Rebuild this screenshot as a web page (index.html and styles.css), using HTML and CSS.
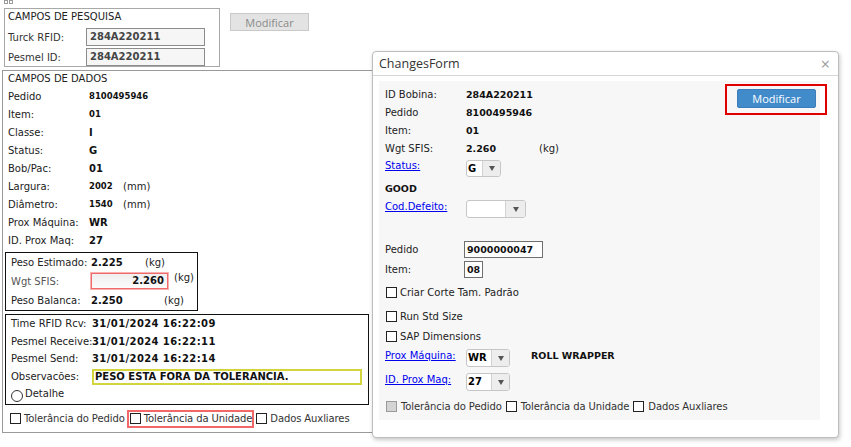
FILE: index.html
```html
<!DOCTYPE html>
<html>
<head>
<meta charset="utf-8">
<link rel="stylesheet" href="styles.css">
</head>
<body>
<div class="grips"><i></i><i></i></div>
<div class="top">
  <div class="search">
    <div class="ttl">CAMPOS DE PESQUISA</div>
    <div class="srow"><span class="slab">Turck RFID:</span><span class="sinp">284A220211</span></div>
    <div class="srow s2"><span class="slab">Pesmel ID:</span><span class="sinp">284A220211</span></div>
  </div>
  <button class="btn-dis">Modificar</button>
</div>
<div class="data">
  <div class="dttl">CAMPOS DE DADOS</div>
  <div class="drow"><span class="dlab">Pedido</span><b class="v8">8100495946</b></div>
  <div class="drow"><span class="dlab">Item:</span><b class="v8">01</b></div>
  <div class="drow"><span class="dlab">Classe:</span><b class="v10">I</b></div>
  <div class="drow"><span class="dlab">Status:</span><b class="v10">G</b></div>
  <div class="drow"><span class="dlab">Bob/Pac:</span><b class="v10">01</b></div>
  <div class="drow"><span class="dlab">Largura:</span><b class="v8 w34">2002</b><span>(mm)</span></div>
  <div class="drow"><span class="dlab">Diâmetro:</span><b class="v8 w34">1540</b><span>(mm)</span></div>
  <div class="drow"><span class="dlab">Prox Máquina:</span><b class="v10">WR</b></div>
  <div class="drow"><span class="dlab">ID. Prox Maq:</span><b class="v10">27</b></div>
  <div class="wbox">
    <div class="wrow r1"><span class="wlab">Peso Estimado:</span><b class="v10 w54">2.225</b><span>(kg)</span></div>
    <div class="wrow r2"><span class="wlab grey">Wgt SFIS:</span><span class="winp">2.260</span><span class="kgup">(kg)</span></div>
    <div class="wrow r3"><span class="wlab">Peso Balanca:</span><b class="v10 w73">2.250</b><span>(kg)</span></div>
  </div>
  <div class="tbox">
    <div class="trow h17"><span class="tlab">Time RFID Rcv:</span><b class="v10 date">31/01/2024 16:22:09</b></div>
    <div class="trow h18"><span class="tlab">Pesmel Receive:</span><b class="v10 date">31/01/2024 16:22:11</b></div>
    <div class="trow h17"><span class="tlab">Pesmel Send:</span><b class="v10 date">31/01/2024 16:22:14</b></div>
    <div class="trow h19"><span class="tlab">Observacões:</span><span class="obs">PESO ESTA FORA DA TOLERANCIA.</span></div>
    <div class="trow h17"><span class="radio"></span><span class="rlab">Detalhe</span></div>
  </div>
  <div class="chks">
    <span class="cb"></span><span class="ct">Tolerância do Pedido</span>
    <span class="red"><span class="cb"></span><span class="ct">Tolerância da Unidade</span></span>
    <span class="cb"></span><span class="ct">Dados Auxliares</span>
  </div>
</div>

<div class="dialog">
  <div class="dhead"><span>ChangesForm</span><span class="close">×</span></div>
  <div class="dbody">
    <div class="panel">
      <div class="pleft">
        <div class="prow"><span class="plab">ID Bobina:</span><b class="pv">284A220211</b></div>
        <div class="prow"><span class="plab">Pedido</span><b class="pv">8100495946</b></div>
        <div class="prow"><span class="plab">Item:</span><b class="pv">01</b></div>
        <div class="prow"><span class="plab">Wgt SFIS:</span><b class="pv w73">2.260</b><span>(kg)</span></div>
        <div class="prow status"><a class="plab lnk">Status:</a><span class="sel w35 h17"><span class="sv">G</span><span class="sa"></span></span></div>
        <div class="prow"><b class="pv">GOOD</b></div>
        <div class="prow cod"><a class="plab lnk">Cod.Defeito:</a><span class="sel w60"><span class="sv"></span><span class="sa wa20"></span></span></div>
        <div class="prow ped"><span class="plab pl79">Pedido</span><span class="tin w79">9000000047</span></div>
        <div class="prow itm"><span class="plab pl79">Item:</span><span class="tin w19">08</span></div>
        <div class="prow m5"><span class="cb ml1"></span><span>Criar Corte Tam. Padrão</span></div>
        <div class="prow m6"><span class="cb ml1"></span><span>Run Std Size</span></div>
        <div class="prow m2"><span class="cb ml1"></span><span>SAP Dimensions</span></div>
        <div class="prow prox"><a class="plab lnk">Prox Máquina:</a><span class="sel w44"><span class="sv">WR</span><span class="sa"></span></span><b class="roll">ROLL WRAPPER</b></div>
        <div class="prow idp"><a class="plab lnk">ID. Prox Maq:</a><span class="sel w44"><span class="sv">27</span><span class="sa"></span></span></div>
        <div class="prow m6 dchk"><span class="cb ml1 dis"></span><span class="ct">Tolerância do Pedido</span><span class="cb"></span><span class="ct">Tolerância da Unidade</span><span class="cb"></span><span class="ct">Dados Auxliares</span></div>
      </div>
      <button class="pbtn">Modificar</button>
    </div>
  </div>
  <div class="hilite"></div>
</div>
</body>
</html>
```
FILE: styles.css
```css
* { box-sizing: border-box; }
body {
  margin: 0;
  width: 851px;
  height: 447px;
  overflow: hidden;
  position: relative;
  background: #fff;
  font-family: "DejaVu Sans", Verdana, sans-serif;
  font-size: 10px;
  color: #222;
  white-space: nowrap;
}
b { font-weight: bold; color: #111; }

.grips { display: flex; gap: 1px; padding-left: 4px; height: 8px; }
.grips i { width: 4px; height: 4px; border: 1px solid #9a9a9a; }

.top { display: flex; align-items: flex-start; margin-left: 4px; }
.search {
  width: 216px;
  height: 59px;
  border: 1px solid #a8a8a8;
  padding-left: 3px;
}
.ttl { line-height: 15px; height: 14px; color: #222; }
.srow { display: flex; align-items: center; margin-top: 5px; }
.srow.s2 { margin-top: 2px; }
.slab { width: 78px; color: #333; }
.sinp {
  width: 119px;
  height: 18px;
  border: 1px solid #8c8c8c;
  background: #f6f6f6;
  font-weight: bold;
  color: #444;
  padding-left: 3px;
  line-height: 16px;
}
.btn-dis {
  margin: 5px 0 0 10px;
  width: 79px;
  height: 18px;
  padding: 0;
  background: #e3e3e3;
  border: 1px solid #c9c9c9;
  color: #8a8a8a;
  font-family: "Open Sans", sans-serif;
  font-size: 11px;
  line-height: 15px;
}

.data {
  margin: 3px 0 0 2px;
  width: 440px;
  height: 363px;
  border: 1px solid #9a9a9a;
}
.dttl { padding-left: 5px; line-height: 16px; height: 16px; }
.drow { display: flex; align-items: center; height: 18px; padding-left: 5px; }
.dlab { width: 81px; flex: none; }
.v8 { font-size: 8.5px; }
.v10 { font-size: 10px; }
.w34 { width: 34px; }
.w54 { width: 54px; }
.w73 { width: 73px; }

.wbox {
  margin: 3px 0 0 2px;
  width: 193px;
  height: 59px;
  border: 1px solid #111;
  padding: 1px 0 0 5px;
}
.wrow { display: flex; align-items: center; }
.r1 { height: 16px; }
.r2 { height: 22px; }
.r3 { height: 17px; }
.wlab { width: 80px; flex: none; }
.grey { color: #555; }
.winp {
  width: 77px;
  height: 16px;
  border: 1px solid #f06a6a;
  box-shadow: 0 0 0 1px #f9b0b0;
  background: linear-gradient(#efefef, #fbfbfb);
  text-align: right;
  padding-right: 3px;
  font-weight: bold;
  color: #111;
  line-height: 14px;
}
.kgup { margin-left: 6px; align-self: flex-start; margin-top: 2px; }

.tbox {
  margin: 3px 0 0 2px;
  width: 364px;
  height: 91px;
  border: 1px solid #111;
  padding-left: 5px;
}
.trow { display: flex; align-items: center; }
.h17 { height: 17px; }
.h18 { height: 18px; }
.h19 { height: 19px; }
.tlab { width: 81px; flex: none; overflow: visible; }
.date { letter-spacing: 0.4px; }
.obs {
  width: 270px;
  height: 16px;
  border: 2px solid #d4d43c;
  background: #fff;
  font-weight: bold;
  color: #111;
  line-height: 12px;
  padding-left: 1px;
}
.radio {
  width: 12px;
  height: 12px;
  border: 1px solid #333;
  border-radius: 50%;
  margin-top: 2px;
}
.rlab { margin-left: 2px; margin-top: -2px; }

.chks { display: flex; align-items: center; margin: 4px 0 0 7px; height: 19px; }
.cb {
  width: 11px;
  height: 11px;
  border: 1px solid #222;
  background: #fff;
  margin-right: 3px;
  flex: none;
}
.ct { color: #333; letter-spacing: -0.1px; }
.red {
  display: flex;
  align-items: center;
  height: 18px;
  border: 2px solid #f26868;
  padding: 0 0 0 1px;
  margin: 0 2px 0 2px;
}

.dialog {
  position: absolute;
  left: 372px;
  top: 51px;
  width: 467px;
  height: 387px;
  background: #fff;
  border: 1px solid #bdbdbd;
  border-radius: 4px;
  box-shadow: 1px 2px 4px rgba(0, 0, 0, 0.22);
}
.dhead {
  height: 24px;
  border-bottom: 1px solid #d6d6d6;
  display: flex;
  align-items: center;
  justify-content: space-between;
  padding: 0 8px 0 6px;
  font-family: "Open Sans", sans-serif;
  font-size: 12.5px;
  color: #333;
}
.close { color: #9a9a9a; font-size: 16px; line-height: 16px; }
.dbody { padding: 5px 0 0 6px; }
.panel {
  width: 441px;
  height: 339px;
  background: #f7f7f7;
  display: flex;
  align-items: flex-start;
  padding: 4px 0 0 6px;
}
.pleft { flex: 1; }
.prow { display: flex; align-items: center; height: 18px; }
.plab { width: 81px; flex: none; }
.pl79 { width: 79px; }
.pv { font-size: 9.5px; }
.lnk { color: #0000ee; text-decoration: underline; line-height: 14px; }
.status { height: 22px; align-items: flex-start; }
.status .lnk { margin-top: 2px; }
.status .sel { margin-top: 3px; }
.cod { height: 22px; align-items: flex-start; padding-top: 3px; }
.ped { height: 17px; margin-top: 22px; }
.itm { height: 17px; margin-top: 3px; }
.m2 { margin-top: 2px; }
.m5 { margin-top: 5px; }
.m6 { margin-top: 6px; }
.prox { margin-top: 4px; align-items: flex-start; }
.prox .lnk { line-height: 13px; }
.idp { margin-top: 6px; align-items: flex-start; }
.ml1 { margin-left: 1px; }
.dis { background: #d4d4d4; border-color: #9a9a9a; }
.dchk .cb { margin-right: 4px; margin-left: 4px; }
.dchk .cb.ml1 { margin-left: 1px; }

.sel {
  display: flex;
  height: 18px;
  border: 1px solid #c6c6c6;
  border-radius: 3px;
  background: #fff;
  overflow: hidden;
}
.sel.h17 { height: 17px; }
.w35 { width: 35px; }
.w44 { width: 44px; }
.w60 { width: 60px; }
.sv { flex: 1; font-weight: bold; font-size: 10px; line-height: 16px; padding-left: 1px; color: #000; }
.sa {
  width: 18px;
  background: #ededed;
  border-left: 1px solid #d2d2d2;
  display: flex;
  align-items: center;
  justify-content: center;
}
.sa.wa20 { width: 20px; }
.sa::after {
  content: "";
  border-left: 3px solid transparent;
  border-right: 3px solid transparent;
  border-top: 5px solid #555;
}
.tin {
  height: 17px;
  border: 1px solid #6f6f6f;
  background: #fff;
  font-weight: bold;
  font-size: 9.5px;
  color: #111;
  line-height: 15px;
  padding-left: 2px;
}
.w79 { width: 79px; }
.w19 { width: 19px; }
.roll { margin-left: 21px; font-size: 9.5px; margin-top: 1px; }

.pbtn {
  width: 79px;
  height: 19px;
  margin: 4px 4px 0 0;
  padding: 0;
  background: #428bca;
  border: 1px solid #3b7dbb;
  border-radius: 2px;
  color: #fff;
  font-family: "Open Sans", sans-serif;
  font-size: 11px;
  line-height: 16px;
}
.hilite {
  position: absolute;
  left: 352px;
  top: 32px;
  width: 102px;
  height: 31px;
  border: 2px solid #e00000;
}
```
